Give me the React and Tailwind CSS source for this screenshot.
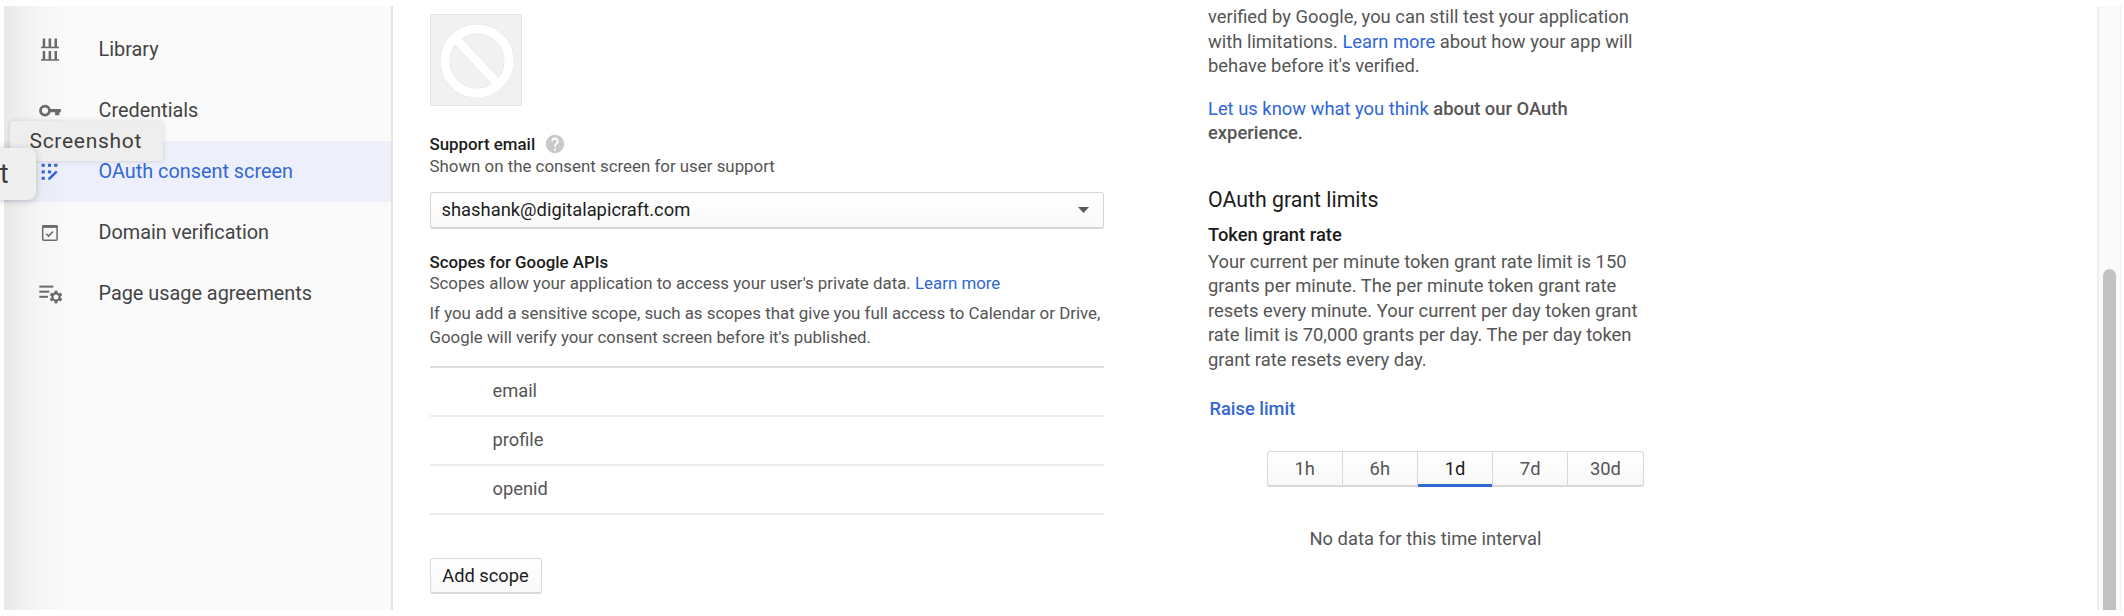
import { MdHelp } from "react-icons/md";

function LibraryIcon() {
  return (
    <svg className="size-6" viewBox="0 0 24 24" fill="#6b6b6b">
      {[0, 12.5].map((y) => (
        <g key={y} transform={`translate(0 ${y})`}>
          <rect x="4.7" y="0.5" width="2.5" height="9" />
          <rect x="10.6" y="0.5" width="2.5" height="9" />
          <rect x="16.5" y="0.5" width="2.5" height="9" />
          <rect x="3" y="8.7" width="18" height="1.5" />
        </g>
      ))}
    </svg>
  );
}

function KeyIcon() {
  return (
    <svg className="size-6" viewBox="0 0 24 24" fill="#6b6b6b">
      <circle cx="7" cy="11.6" r="4.5" fill="none" stroke="#6b6b6b" strokeWidth="2.8" />
      <path d="M12 10H22.8V13.2H21.4V16.2H17.1V13.2H12z" />
    </svg>
  );
}

function ConsentIcon() {
  return (
    <svg className="size-6" viewBox="0 0 24 24" fill="#3367d6">
      <rect x="3.6" y="3.8" width="3.2" height="3" />
      <rect x="9.9" y="3.8" width="3.2" height="3" />
      <rect x="16.2" y="3.8" width="3.2" height="3" />
      <rect x="3.6" y="10.4" width="3.2" height="3" />
      <rect x="9.9" y="10.4" width="3.2" height="3" />
      <rect x="3.6" y="16.8" width="3.2" height="3" />
      <path d="M10.2 17.9L17.9 10.5L19.7 12.2L12.1 19.8H10.2z" />
    </svg>
  );
}

function DomainIcon() {
  return (
    <svg className="size-6" viewBox="0 0 24 24" fill="none" stroke="#6b6b6b">
      <rect x="4.7" y="4.8" width="14.4" height="14.4" rx="1" strokeWidth="1.5" />
      <path d="M4.3 5.6H19.5" strokeWidth="2.6" />
      <path d="M8.2 12.8L10.6 15.1L15 10.4" strokeWidth="1.5" />
    </svg>
  );
}

function AgreementsIcon() {
  return (
    <svg className="size-6 overflow-visible" viewBox="0 0 24 24" fill="#6b6b6b">
      <rect x="1.3" y="3.6" width="14" height="2" />
      <rect x="1.3" y="8.7" width="10" height="2" />
      <rect x="1.3" y="13.8" width="8.6" height="2" />
      <g transform="translate(18 15)">
        <circle r="3.6" fill="none" stroke="#6b6b6b" strokeWidth="2.2" />
        {[30, 90, 150, 210, 270, 330].map((angle) => (
          <rect key={angle} x="3.6" y="-1.5" width="2.7" height="3" transform={`rotate(${angle})`} />
        ))}
      </g>
    </svg>
  );
}

const navItems = [
  { label: "Library", Icon: LibraryIcon },
  { label: "Credentials", Icon: KeyIcon },
  { label: "OAuth consent screen", Icon: ConsentIcon, active: true },
  { label: "Domain verification", Icon: DomainIcon },
  { label: "Page usage agreements", Icon: AgreementsIcon },
];

function Sidebar() {
  return (
    <nav className="relative w-[389px] shrink-0 border-r-2 border-[#e4e4e4] bg-[#fafafa] pt-[13px]">
      {navItems.map(({ label, Icon, active }) => (
        <div
          key={label}
          className={`flex h-[61px] items-center gap-[37px] pl-[33.5px] text-[19.85px] leading-[28px] ${
            active ? "bg-[#edf0fa] text-[#3367d6]" : "text-[#444444]"
          }`}
        >
          <Icon />
          <span className="pt-px">{label}</span>
        </div>
      ))}
      <div className="pointer-events-none absolute inset-y-0 left-0 w-[66px] bg-linear-to-r from-black/7 via-black/2 to-transparent" />
    </nav>
  );
}

function Link({ children }) {
  return <a className="font-normal text-[#2f66d8]">{children}</a>;
}

function ConsentForm() {
  return (
    <section className="ml-[36.5px] w-[674.5px] shrink-0 pt-2 text-[16.86px] text-[#555555]">
      <div className="flex size-[92px] items-center justify-center border border-[#e6e6e6] bg-[#f1f1f1]">
        <svg className="size-[80px]" viewBox="0 0 80 80" fill="none">
          <g stroke="#e9e9e9" strokeWidth="10.5">
            <circle cx="41" cy="41" r="32" />
            <path d="M19 18L63 65" />
          </g>
          <g stroke="#ffffff" strokeWidth="9">
            <circle cx="41" cy="41" r="32" />
            <path d="M19 18L63 65" />
          </g>
        </svg>
      </div>
      <div className="mt-[27px] flex h-[22px] items-center gap-[9px] leading-[22px]">
        <h3 className="font-medium text-[#1c1c1c]">Support email</h3>
        <MdHelp className="size-[22px] text-[#c9c9c9]" />
      </div>
      <p className="mt-px leading-[21px]">Shown on the consent screen for user support</p>
      <div className="mt-[15px] flex h-[37px] items-center justify-between rounded-[3px] border-[1.5px] border-b-2 border-[#d6d6d6] bg-linear-to-b from-white to-[#f9f9f9] pl-[11px] pr-[14px] text-[18.38px] text-[#1c1c1c]">
        <span>shashank@digitalapicraft.com</span>
        <svg className="h-[6px] w-[11px]" viewBox="0 0 11 6" fill="#5a5a5a">
          <path d="M0 0H11L5.5 6z" />
        </svg>
      </div>
      <h3 className="mt-[23px] font-medium leading-[21px] text-[#1c1c1c]">Scopes for Google APIs</h3>
      <p className="whitespace-nowrap leading-[21px]">
        Scopes allow your application to access your user's private data. <Link>Learn more</Link>
      </p>
      <p className="mt-[7px] whitespace-nowrap leading-[24px]">
        If you add a sensitive scope, such as scopes that give you full access to Calendar or Drive,
        <br />
        Google will verify your consent screen before it's published.
      </p>
      <ul className="mt-[16.5px] border-t-2 border-[#dedede] text-[18.3px] text-[#555555]">
        {["email", "profile", "openid"].map((scope) => (
          <li key={scope} className="flex h-[49px] items-center border-b-2 border-[#ededed] pl-[63px]">
            {scope}
          </li>
        ))}
      </ul>
      <button className="mt-[43px] flex h-[36px] w-[112px] items-center justify-center rounded-[3px] border-[1.5px] border-b-2 border-[#d9d9d9] bg-linear-to-b from-white to-[#f9f9f9] pt-px text-[18.3px] text-[#1c1c1c]">
        Add scope
      </button>
    </section>
  );
}

function InfoPanel() {
  return (
    <aside className="ml-[104px] w-[440px] shrink-0 whitespace-nowrap text-[18.37px] leading-[24.5px] text-[#555555]">
      <p className="-mt-px">
        verified by Google, you can still test your application
        <br />
        with limitations. <Link>Learn more</Link> about how your app will
        <br />
        behave before it's verified.
      </p>
      <p className="mt-[18px] font-medium">
        <Link>Let us know what you think</Link> about our OAuth
        <br />
        experience.
      </p>
      <h2 className="mt-[40.5px] text-[21.3px] leading-[28px] text-[#1c1c1c]">OAuth grant limits</h2>
      <h3 className="mt-[8.5px] font-medium leading-[24px] text-[#1c1c1c]">Token grant rate</h3>
      <p className="mt-[3px]">
        Your current per minute token grant rate limit is 150
        <br />
        grants per minute. The per minute token grant rate
        <br />
        resets every minute. Your current per day token grant
        <br />
        rate limit is 70,000 grants per day. The per day token
        <br />
        grant rate resets every day.
      </p>
      <a className="mt-[24.5px] block pl-[1.5px] text-[18.3px] font-medium leading-[24px] text-[#3367d6]">Raise limit</a>
      <div className="ml-[58.5px] mt-[30px] flex h-[36px] w-[377px] divide-x-[1.5px] divide-[#d9d9d9] rounded-[3px] border-[1.5px] border-b-2 border-[#d9d9d9] bg-linear-to-b from-white to-[#f8f8f8]">
        {["1h", "6h", "1d", "7d", "30d"].map((range) => (
          <button
            key={range}
            className={`relative flex flex-1 items-center justify-center pt-[2px] ${range === "1d" ? "text-[#1c1c1c]" : ""}`}
          >
            {range}
            {range === "1d" && <span className="absolute -bottom-[2px] left-0 right-0 h-[3px] bg-[#3367d6]" />}
          </button>
        ))}
      </div>
      <p className="ml-[101.5px] mt-[40px] text-[18.36px] leading-[24px]">No data for this time interval</p>
    </aside>
  );
}

function Scrollbar() {
  return (
    <div className="ml-auto flex w-[24px] shrink-0 justify-center border-l-2 border-r border-[#ededed] bg-[#fafafa] pt-[263px]">
      <div className="h-full w-[13px] rounded-t-full bg-[#c1c1c1]" />
    </div>
  );
}

export default function App() {
  return (
    <div className="relative h-[616px] w-[2124px] overflow-hidden bg-white py-[6px] pl-[4px] pr-[3px] font-['Roboto',sans-serif]">
      <div className="flex h-[604px] overflow-hidden">
        <Sidebar />
        <ConsentForm />
        <InfoPanel />
        <Scrollbar />
      </div>
      <div className="absolute left-[10px] top-[121px] flex h-[40px] w-[153px] items-center rounded-[4px] bg-[#eeeeef] pl-[19.5px] pt-px text-[21px] tracking-[0.7px] text-[#3f3f3f] shadow-[0_0_5px_rgba(0,0,0,0.15)]">
        Screenshot
      </div>
      <div className="absolute left-[-14px] top-[148px] flex h-[52px] w-[50px] items-center justify-end rounded-[8px] bg-[#efefef] pr-[27.5px] text-[27px] text-[#3f3f3f] shadow-[0_1px_7px_rgba(0,0,0,0.2)]">
        t
      </div>
    </div>
  );
}
